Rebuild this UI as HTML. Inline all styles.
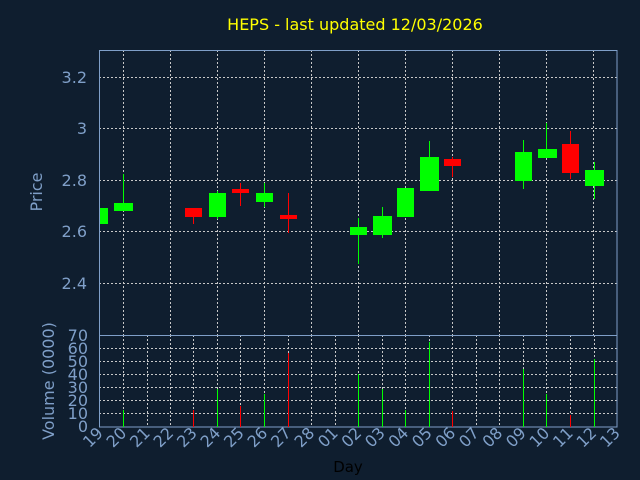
<!DOCTYPE html><html><head><style>html,body{margin:0;padding:0;background:#0f1e2f;}svg{display:block}</style></head><body>
<svg width="640" height="480" xmlns="http://www.w3.org/2000/svg" font-family="DejaVu Sans, sans-serif">
<rect width="640" height="480" fill="#0f1e2f"/>
<text x="355" y="30" fill="#ffff00" font-size="16" text-anchor="middle">HEPS - last updated 12/03/2026</text>
<g stroke="#c8c8c8" stroke-width="1" stroke-dasharray="2,2" fill="none">
<path d="M99 77.5H617M99 128.5H617M99 180.5H617M99 231.5H617M99 283.5H617"/>
<path d="M123.5 50V335M170.5 50V335M217.5 50V335M264.5 50V335M311.5 50V335M358.5 50V335M405.5 50V335M452.5 50V335M499.5 50V335M546.5 50V335M593.5 50V335"/>
<path d="M99 348.5H617M99 361.5H617M99 374.5H617M99 387.5H617M99 400.5H617M99 413.5H617"/>
<path d="M123.5 335V427M147.5 335V427M170.5 335V427M193.5 335V427M217.5 335V427M240.5 335V427M264.5 335V427M288.5 335V427M311.5 335V427M335.5 335V427M358.5 335V427M382.5 335V427M405.5 335V427M429.5 335V427M452.5 335V427M476.5 335V427M499.5 335V427M523.5 335V427M546.5 335V427M570.5 335V427M594.5 335V427"/>
</g>
<g stroke="#7f9fc8" fill="none">
<rect x="99.5" y="50.5" width="517.5" height="376.5"/>
<path d="M99 335.5H617"/>
</g>
<g fill="#7f9fc8" font-size="16" text-anchor="end">
<text x="87" y="83">3.2</text><text x="87" y="134">3</text><text x="87" y="186">2.8</text><text x="87" y="237">2.6</text><text x="87" y="289">2.4</text>
</g>
<g fill="#7f9fc8" font-size="16" text-anchor="end">
<text x="88" y="341">70</text><text x="88" y="354">60</text><text x="88" y="367">50</text><text x="88" y="380">40</text><text x="88" y="393">30</text><text x="88" y="406">20</text><text x="88" y="419">10</text><text x="88" y="432">0</text>
</g>
<text transform="translate(42,192) rotate(-90)" fill="#7f9fc8" font-size="16" text-anchor="middle">Price</text>
<text transform="translate(54,381) rotate(-90)" fill="#7f9fc8" font-size="16" text-anchor="middle">Volume (0000)</text>
<text x="348" y="472" fill="#000" font-size="15" text-anchor="middle">Day</text>
<g fill="#7f9fc8" font-size="16" text-anchor="end">
<text transform="translate(104,434) rotate(-45)">19</text>
<text transform="translate(127.5,434) rotate(-45)">20</text>
<text transform="translate(151,434) rotate(-45)">21</text>
<text transform="translate(174.5,434) rotate(-45)">22</text>
<text transform="translate(198,434) rotate(-45)">23</text>
<text transform="translate(221.5,434) rotate(-45)">24</text>
<text transform="translate(245,434) rotate(-45)">25</text>
<text transform="translate(268.5,434) rotate(-45)">26</text>
<text transform="translate(292,434) rotate(-45)">27</text>
<text transform="translate(315.5,434) rotate(-45)">28</text>
<text transform="translate(339,434) rotate(-45)">01</text>
<text transform="translate(362.5,434) rotate(-45)">02</text>
<text transform="translate(386,434) rotate(-45)">03</text>
<text transform="translate(409.5,434) rotate(-45)">04</text>
<text transform="translate(433,434) rotate(-45)">05</text>
<text transform="translate(456.5,434) rotate(-45)">06</text>
<text transform="translate(480,434) rotate(-45)">07</text>
<text transform="translate(503.5,434) rotate(-45)">08</text>
<text transform="translate(527,434) rotate(-45)">09</text>
<text transform="translate(550.5,434) rotate(-45)">10</text>
<text transform="translate(574,434) rotate(-45)">11</text>
<text transform="translate(597.5,434) rotate(-45)">12</text>
<text transform="translate(621,434) rotate(-45)">13</text>
</g>
<g stroke-width="1">
<g fill="#00ff00" stroke="#00ff00">
<line x1="123.5" y1="174" x2="123.5" y2="204"/>
<line x1="217.5" y1="191" x2="217.5" y2="219"/>
<line x1="264.5" y1="183" x2="264.5" y2="207"/>
<line x1="358.5" y1="218" x2="358.5" y2="264"/>
<line x1="382.5" y1="207" x2="382.5" y2="238"/>
<line x1="429.5" y1="141" x2="429.5" y2="191"/>
<line x1="523.5" y1="140" x2="523.5" y2="189"/>
<line x1="546.5" y1="123" x2="546.5" y2="158"/>
<line x1="594.5" y1="162" x2="594.5" y2="199"/>
</g>
<g fill="#ff0000" stroke="#ff0000">
<line x1="193.5" y1="208" x2="193.5" y2="224"/>
<line x1="240.5" y1="183" x2="240.5" y2="206"/>
<line x1="288.5" y1="193" x2="288.5" y2="233"/>
<line x1="452.5" y1="157" x2="452.5" y2="177"/>
<line x1="570.5" y1="131" x2="570.5" y2="179"/>
</g>
</g>
<g fill="#00ff00">
<rect x="100" y="208" width="8" height="16"/>
<rect x="114" y="203" width="19" height="8"/>
<rect x="209" y="193" width="17" height="24"/>
<rect x="256" y="193" width="17" height="9"/>
<rect x="350" y="227" width="17" height="8"/>
<rect x="373" y="216" width="19" height="19"/>
<rect x="397" y="188" width="17" height="29"/>
<rect x="420" y="157" width="19" height="34"/>
<rect x="515" y="152" width="17" height="29"/>
<rect x="538" y="149" width="19" height="9"/>
<rect x="585" y="170" width="19" height="16"/>
</g>
<g fill="#ff0000">
<rect x="185" y="208" width="17" height="9"/>
<rect x="232" y="189" width="17" height="4"/>
<rect x="280" y="215" width="17" height="4"/>
<rect x="444" y="159" width="17" height="7"/>
<rect x="562" y="144" width="17" height="29"/>
</g>
<g stroke-width="1">
<g stroke="#00ff00">
<path d="M123.5 427V410M217.5 427V389M264.5 427V394M358.5 427V374M382.5 427V389M405.5 427V410M429.5 427V342M523.5 427V369M546.5 427V394M594.5 427V359"/>
</g>
<g stroke="#ff0000">
<path d="M193.5 427V410M240.5 427V406M288.5 427V353M452.5 427V411M570.5 427V415"/>
</g>
</g>
</svg>
</body></html>
